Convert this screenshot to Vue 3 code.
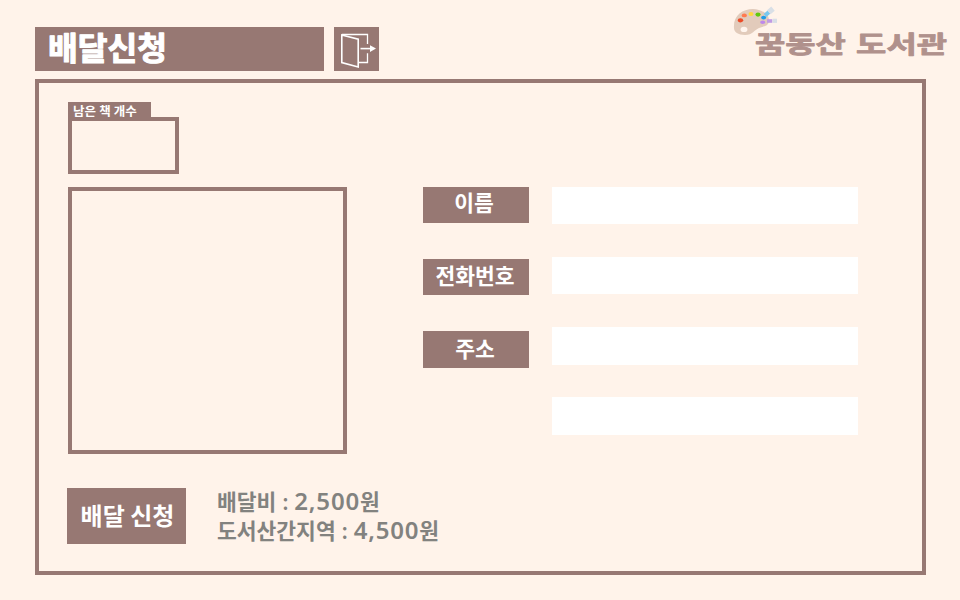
<script setup>
const fields = [
  { id: 'name', label: '이름' },
  { id: 'phone', label: '전화번호' },
  { id: 'address', label: '주소' },
]
const fees = [
  { id: 'base', label: '배달비', amount: '2,500' },
  { id: 'island', label: '도서산간지역', amount: '4,500' },
]
</script>

<template>
  <div class="page">
    <header class="header">
      <h1 class="title">
        <svg class="title-text" width="289" height="44" viewBox="0 0 289 44">
          <text x="13" y="33" textLength="119" lengthAdjust="spacingAndGlyphs">배달신청</text>
        </svg>
      </h1>
      <button class="exit" aria-label="나가기">
        <svg viewBox="0 0 45 44" width="45" height="44" fill="none" stroke="#fff">
          <path d="M7.8 8 L24.2 12.2 V40 L7.8 35.6 Z" stroke-width="1.6" />
          <path d="M7.8 7.5 H33.5 V17 M33.5 26.3 V35.5 H25" stroke-width="1.3" />
          <path d="M26.5 21.6 H37" stroke-width="1.6" />
          <path d="M36 18.3 L42 21.6 L36 24.9 Z" fill="#fff" stroke="none" />
        </svg>
      </button>
      <div class="logo">
        <svg class="brand" viewBox="0 0 225 60" width="225" height="60">
          <text x="22" y="47" textLength="192" lengthAdjust="spacingAndGlyphs">꿈동산 도서관</text>
        </svg>
        <svg class="palette" viewBox="0 0 48 32" width="48" height="32">
          <path d="M1 22 C0 10 9 3 20 3 C28 3 36 8 36 14 C36 21 30 20 26 22 C21 24 20 29 12 29 C5 29 1 26 1 22Z" fill="#e2cbbb" />
          <ellipse cx="11" cy="23.4" rx="3.4" ry="2.6" fill="#fff5ee" />
          <ellipse cx="7.5" cy="14.3" rx="2.7" ry="2.1" fill="#ec4b27" />
          <ellipse cx="11.3" cy="9.4" rx="2.6" ry="1.9" fill="#ff7a4f" />
          <ellipse cx="18" cy="8" rx="2.5" ry="2.1" fill="#ffd83d" />
          <ellipse cx="25" cy="8.6" rx="2.6" ry="2.1" fill="#62c90d" />
          <path d="M32 9.5 L36 6" stroke="#78c8ef" stroke-width="4.2" />
          <path d="M35.8 6.2 L40 2.6" stroke="#d9dfe6" stroke-width="5.4" />
          <ellipse cx="30.6" cy="11.6" rx="2.5" ry="1.9" fill="#1d9ce8" />
          <ellipse cx="29.7" cy="16.3" rx="2.6" ry="1.7" fill="#be88ec" />
          <path d="M34 15 H39.3" stroke="#c09be4" stroke-width="3.6" />
          <path d="M39.6 14.8 H44" stroke="#d9dfe6" stroke-width="4.2" />
        </svg>
      </div>
    </header>

    <main class="panel">
      <section class="top">
        <div class="left">
          <div class="tab">남은 책 개수</div>
          <div class="count"></div>
          <div class="books"></div>
        </div>
        <div class="labels">
          <label v-for="f in fields" :key="f.id" :for="f.id" :class="['label', f.id]">{{ f.label }}</label>
        </div>
        <div class="inputs">
          <input v-for="f in fields" :id="f.id" :key="f.id" type="text" />
          <input class="detail" type="text" aria-label="상세 주소" />
        </div>
      </section>
      <section class="bottom">
        <button class="submit">배달 신청</button>
        <div class="fees">
          <p v-for="f in fees" :key="f.id">{{ f.label }}<span class="colon">:</span><span class="num">{{ f.amount }}</span>원</p>
        </div>
      </section>
    </main>
  </div>
</template>

<style>
body { margin: 0; background: #fff3ea; }
</style>

<style scoped>
* { box-sizing: border-box; }
.page {
  width: 960px;
  height: 600px;
  padding: 27px 34px 25px 35px;
  background: #fff3ea;
  font-family: "Noto Sans CJK KR", sans-serif;
  font-weight: 700;
  overflow: hidden;
}
.header { display: flex; height: 44px; position: relative; }
.title { width: 289px; height: 44px; margin: 0 10px 0 0; background: #977873; }
.title-text { display: block; overflow: visible; }
.title-text text {
  fill: #fff;
  stroke: #fff;
  stroke-width: 1.1px;
  stroke-linejoin: round;
  font-size: 32px;
  font-weight: 700;
}
.exit { width: 45px; height: 44px; padding: 0; border: 0; background: #977873; }
.exit svg { display: block; }
.logo { position: absolute; left: 698px; top: -21px; width: 225px; height: 60px; }
.palette { position: absolute; left: 0; top: 0; }
.brand { position: absolute; left: 0; top: 0; overflow: visible; }
.brand text {
  fill: #b0918c;
  stroke: #b0918c;
  stroke-width: .8px;
  stroke-linejoin: round;
  font-size: 24px;
  font-weight: 700;
  word-spacing: 2px;
}
.panel {
  width: 891px;
  height: 496px;
  margin-top: 8px;
  border: 4px solid #977873;
  padding: 19px 0 0 28px;
}
.top { display: flex; height: 352px; padding-left: 1px; }
.left { width: 279px; margin-right: 76px; }
.tab {
  width: 83px;
  height: 15px;
  padding-left: 5px;
  background: #977873;
  color: #fff;
  font-size: 12.5px;
  line-height: 17px;
  word-spacing: .3px;
  white-space: nowrap;
}
.count { width: 111px; height: 57px; border: 4px solid #977873; }
.books { width: 279px; height: 267px; margin-top: 13px; border: 4px solid #977873; }
.labels { display: flex; flex-direction: column; gap: 36px; width: 106px; padding-top: 85px; margin-right: 23px; }
.label {
  height: 36px;
  background: #977873;
  color: #fff;
  font-size: 21.5px;
  line-height: 32px;
  text-align: center;
  padding-right: 2px;
  white-space: nowrap;
}
.name { line-height: 30px; padding-right: 4px; }
.address { height: 37px; line-height: 34px; }
.inputs { display: grid; grid-template-rows: 37px 37px 38px 38px; row-gap: 33px; align-content: start; width: 306px; padding-top: 85px; }
.inputs input { width: 306px; height: 100%; border: 0; padding: 0 8px; background: #fff; font-size: 18px; outline: none; }
.inputs .detail { margin-top: -1px; }
.bottom { display: flex; padding-top: 34px; }
.submit {
  width: 119px;
  height: 56px;
  margin-right: 31px;
  padding: 0 0 3px 2px;
  border: 0;
  background: #977873;
  color: #fff;
  font: inherit;
  font-size: 24px;
  white-space: nowrap;
}
.fees { margin-top: -2px; color: #82827f; font-size: 21.5px; line-height: 29px; }
.fees p { margin: 0; white-space: nowrap; }
.colon { display: inline-block; width: 18px; text-align: center; font-weight: 500; }
.num { font-family: "Noto Sans", sans-serif; font-size: 24px; line-height: 1; font-weight: 600; letter-spacing: .8px; }
</style>
